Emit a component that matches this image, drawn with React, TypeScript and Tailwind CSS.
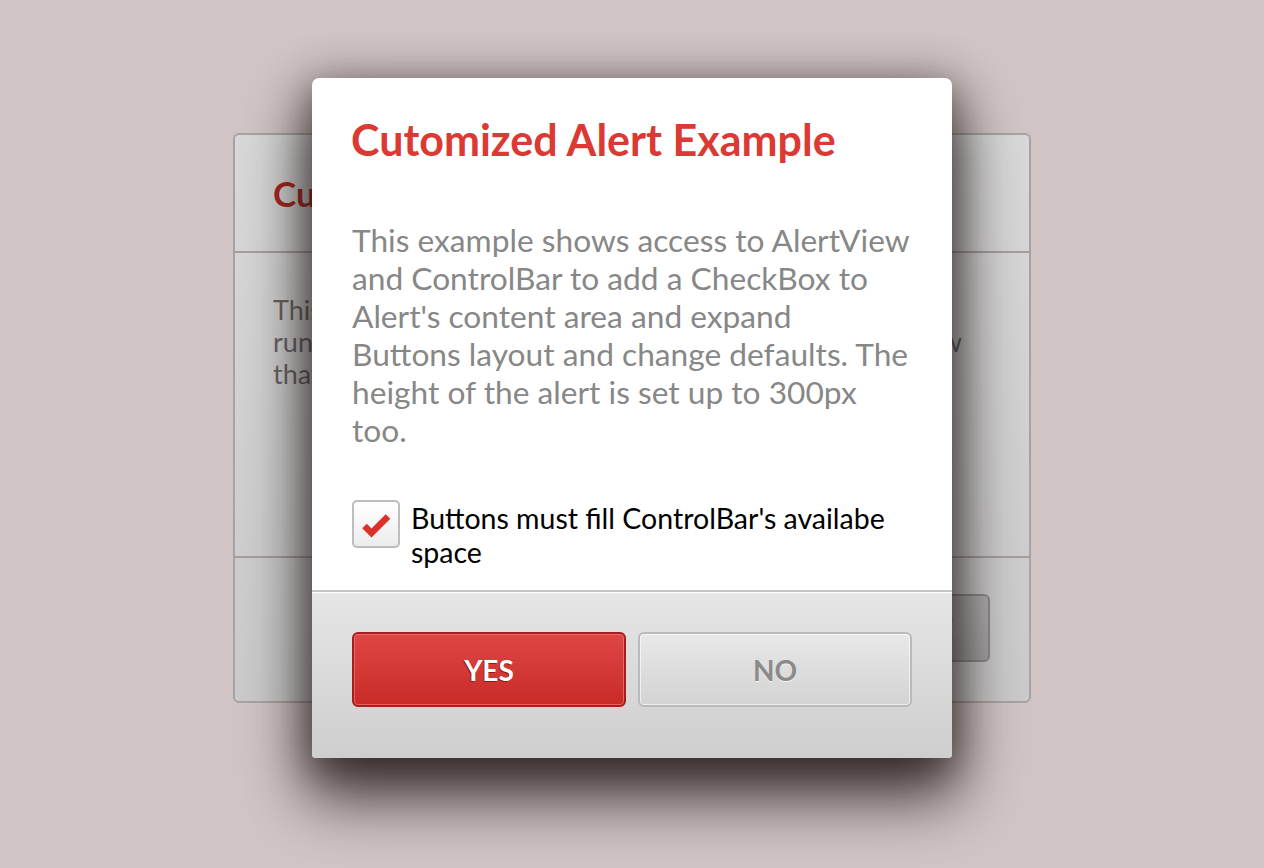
import React from "react";

export default function App() {
  const lines = [
    "This example shows access to AlertView",
    "and ControlBar to add a CheckBox to",
    "Alert's content area and expand",
    "Buttons layout and change defaults. The",
    "height of the alert is set up to 300px",
    "too.",
  ];
  return (
    <div
      className="relative w-full h-[868px] overflow-hidden bg-[#d1c5c5] flex justify-center pt-[133px]"
      style={{ fontFamily: "Lato, 'Open Sans', sans-serif" }}
    >
      {/* Background alert */}
      <div className="w-[798px] h-[570px] rounded-[6px] border-2 border-[#aaa3a3] bg-gradient-to-b from-[#d9d9d9] to-[#cbcbcb] flex flex-col overflow-hidden">
        <div className="h-[118px] flex items-center px-[38px] border-b-2 border-[#a59f9f]">
          <div className="text-[35px] font-bold text-[#a8271f] leading-none">Cutomized Alert Example</div>
        </div>
        <div className="flex-1 border-b-2 border-[#a59f9f] pl-[38px] pr-[67px] pt-[41px] text-[27px] leading-[32px] text-[#666]">
          <div className="whitespace-nowrap">This is a simple alert shown on top of the</div>
          <div className="flex justify-between whitespace-nowrap">
            <span>running application as a second</span>
            <span>window</span>
          </div>
          <div className="whitespace-nowrap">that holds its own content.</div>
        </div>
        <div className="h-[143px] flex items-center justify-end pr-[39px] pb-[4px]">
          <div className="w-[160px] h-[68px] rounded-[6px] border-2 border-[#8e8e8e] bg-gradient-to-b from-[#b4b4b4] to-[#a6a6a6] flex items-center justify-center text-[28px] font-bold text-[#444]">
            CLOSE
          </div>
        </div>
      </div>

      {/* Foreground alert */}
      <div className="absolute left-[312px] top-[78px] w-[640px] h-[680px] rounded-t-[7px] rounded-b-[4px] bg-white shadow-[0_34px_62px_6px_rgba(30,20,20,0.8),0_0_44px_6px_rgba(60,40,40,0.22),0_10px_30px_rgba(0,0,0,0.25)] flex flex-col overflow-hidden">
        <div className="px-[39px] pt-[40px]">
          <div className="text-[43px] leading-[44px] font-bold text-[#db3a34] whitespace-nowrap">Cutomized Alert Example</div>
        </div>
        <div className="pl-[40px] pr-[20px] pt-[59px] text-[31.7px] leading-[38px] text-[#878787]">
          {lines.map((l) => (
            <div key={l} className="whitespace-nowrap">{l}</div>
          ))}
        </div>
        <div className="px-[40px] pt-[51px] flex items-start gap-[11px]">
          <div className="w-[48px] h-[48px] shrink-0 rounded-[5px] border-2 border-[#bdbdbd] bg-gradient-to-b from-[#ffffff] to-[#ececec] flex items-center justify-center">
            <svg width="48" height="48" viewBox="0 0 48 48" className="-m-[2px]">
              <polyline
                points="12.5,26 19.5,33 36,16.5"
                fill="none"
                stroke="#dc302b"
                strokeWidth="6.5"
                strokeLinecap="butt"
                strokeLinejoin="miter"
              />
            </svg>
          </div>
          <div className="text-[28.5px] leading-[34px] text-black pt-[1px]">
            Buttons must fill ControlBar's availabe space
          </div>
        </div>
        <div className="mt-auto h-[168px] border-t-2 border-[#c4c4c4] bg-gradient-to-b from-[#e6e6e6] to-[#cecece] shadow-[inset_0_1px_0_#ffffff] flex items-start gap-[12px] px-[40px] pt-[40px]">
          <div className="w-[274px] h-[75px] rounded-[6px] border-2 border-[#a51e1c] bg-gradient-to-b from-[#de4644] to-[#c92a26] shadow-[inset_0_0_0_1px_rgba(255,140,140,0.55)] flex items-center justify-center text-[28px] font-bold text-white [text-shadow:-1px_1px_0_#8a1a18]">
            YES
          </div>
          <div className="w-[274px] h-[75px] rounded-[6px] border-2 border-[#bababa] bg-gradient-to-b from-[#e8e8e8] to-[#d3d3d3] shadow-[inset_0_0_0_1px_rgba(255,255,255,0.6)] flex items-center justify-center text-[28px] font-bold text-[#8a8a8a] [text-shadow:0_1px_0_#f4f4f4]">
            NO
          </div>
        </div>
      </div>
    </div>
  );
}
